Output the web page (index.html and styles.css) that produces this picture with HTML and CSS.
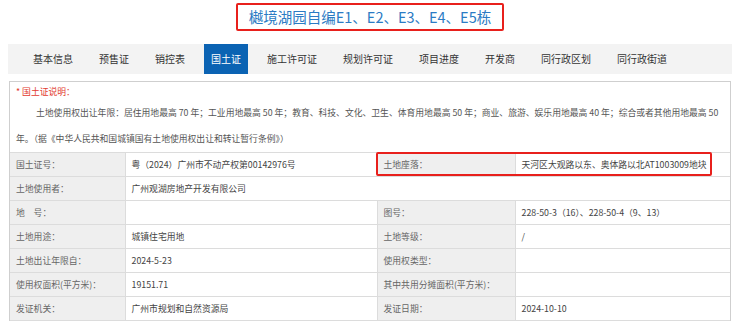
FILE: index.html
```html
<!DOCTYPE html>
<html lang="zh-CN">
<head>
    <meta charset="UTF-8">
    <title>樾境湖园自编E1、E2、E3、E4、E5栋</title>
    <link rel="stylesheet" href="styles.css">
</head>
<body>
    <div class="page">
        <div class="page__head">
            <h1 class="page__title">樾境湖园自编E1、E2、E3、E4、E5栋</h1>
        </div>
        <ul class="tabs">
            <li class="tabs__item">基本信息</li>
            <li class="tabs__item">预售证</li>
            <li class="tabs__item">销控表</li>
            <li class="tabs__item tabs__item--active">国土证</li>
            <li class="tabs__item">施工许可证</li>
            <li class="tabs__item">规划许可证</li>
            <li class="tabs__item">项目进度</li>
            <li class="tabs__item">开发商</li>
            <li class="tabs__item">同行政区划</li>
            <li class="tabs__item">同行政街道</li>
        </ul>
        <div class="land">
            <div class="land__note">
                <p class="land__note-title">* 国土证说明：</p>
                <p class="land__note-text">土地使用权出让年限：居住用地最高 70 年；工业用地最高 50 年；教育、科技、文化、卫生、体育用地最高 50 年；商业、旅游、娱乐用地最高 40 年；综合或者其他用地最高 50 年。（据《中华人民共和国城镇国有土地使用权出让和转让暂行条例》）</p>
            </div>
            <table class="land__table">
                <colgroup>
                    <col class="land__col1">
                    <col class="land__col2">
                    <col class="land__col3">
                    <col>
                </colgroup>
                <tr>
                    <td class="land__label">国土证号：</td>
                    <td>粤（2024）广州市不动产权第00142976号</td>
                    <td class="land__label">土地座落：</td>
                    <td>天河区大观路以东、奥体路以北AT1003009地块</td>
                </tr>
                <tr>
                    <td class="land__label">土地使用者：</td>
                    <td colspan="3">广州观湖房地产开发有限公司</td>
                </tr>
                <tr>
                    <td class="land__label">地　号：</td>
                    <td></td>
                    <td class="land__label">图号：</td>
                    <td>228-50-3（16）、228-50-4（9、13）</td>
                </tr>
                <tr>
                    <td class="land__label">土地用途：</td>
                    <td>城镇住宅用地</td>
                    <td class="land__label">土地等级：</td>
                    <td>/</td>
                </tr>
                <tr>
                    <td class="land__label">土地出让年限自：</td>
                    <td>2024-5-23</td>
                    <td class="land__label">使用权类型：</td>
                    <td></td>
                </tr>
                <tr>
                    <td class="land__label">使用权面积(平方米)：</td>
                    <td>19151.71</td>
                    <td class="land__label">其中共用分摊面积(平方米)：</td>
                    <td></td>
                </tr>
                <tr>
                    <td class="land__label">发证机关：</td>
                    <td>广州市规划和自然资源局</td>
                    <td class="land__label">发证日期：</td>
                    <td>2024-10-10</td>
                </tr>
            </table>
            <div class="land__mark"></div>
        </div>
    </div>
</body>
</html>
```

FILE: styles.css
```css
body{
    margin: 0;
    font-family: "Noto Sans CJK SC", sans-serif;
    color: #333;
    background: #fff;
}
.page{
    padding: 3px 8px 0;
}
.page__head{
    text-align: center;
}
.page__title{
    display: inline-block;
    margin: 0;
    padding: 0 11px;
    height: 24px;
    line-height: 24px;
    border: 2px solid #e8201c;
    border-radius: 2px;
    font-size: 14.5px;
    font-weight: normal;
    color: #2b7bc4;
}
.tabs{
    display: flex;
    gap: 12px;
    margin: 13px 0 0;
    padding: 0 0 0 18px;
    list-style: none;
    background: #f3f3f3;
    height: 30px;
}
.tabs__item{
    padding: 0 7px;
    line-height: 30px;
    font-size: 10px;
    color: #333;
}
.tabs__item--active{
    background: #0b63b3;
    color: #fff;
}
.land{
    position: relative;
    margin: 7px 1px 0;
    border: 1px solid #cfcfcf;
    border-bottom: 0;
}
.land__note{
    padding: 2px 6px 0;
    font-size: 8.8px;
    color: #555;
}
.land__note-title{
    margin: 0;
    line-height: 16px;
    color: #e23a2f;
}
.land__note-text{
    margin: 0;
    line-height: 26px;
    text-indent: 20px;
}
.land__table{
    width: 100%;
    border-collapse: collapse;
    font-size: 8.8px;
    color: #444;
}
.land__col1{
    width: 115px;
}
.land__col2{
    width: 252px;
}
.land__col3{
    width: 138px;
}
.land__table td{
    height: 23px;
    padding: 0 6px;
    border: 1px solid #dcdcdc;
}
.land__table tr td:first-child{
    border-left: 0;
}
.land__table tr td:last-child{
    border-right: 0;
}
.land__table .land__label{
    background: #efefef;
    color: #666;
}
.land__mark{
    position: absolute;
    left: 366px;
    top: 70px;
    width: 332px;
    height: 20px;
    border: 2px solid #e8201c;
    border-radius: 2px;
}
```
